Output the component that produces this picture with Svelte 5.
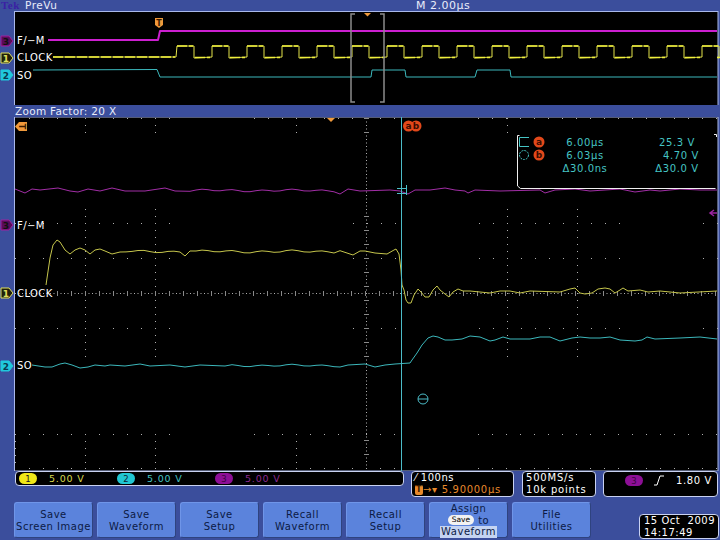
<script>
// every trace is stored in screen coordinates, the svg viewBoxes line up with them
const pts = (list) => list.map((p) => p.join(",")).join(" ");

// small repeatable ripple for the flat stretches of a trace
const ripple = (x0, x1, y, amp, step = 6) => {
	const out = [];
	for (let x = x0; x <= x1; x += step) {
		out.push([x, +(y + amp * Math.sin(x * 0.21) + amp * 0.6 * Math.sin(x * 0.077 + 1)).toFixed(1)]);
	}
	return out;
};

// preview square wave, 35px period
const clockPts = () => {
	const out = [[53, 57], [176, 57]];
	for (let x = 177; x < 718; x += 35) {
		out.push([x, 46], [x + 17, 46], [x + 17, 58], [Math.min(x + 35, 717), 57]);
	}
	return out;
};

// the flat tops and bottoms read as thicker dashes on the capture
const clockFlats = () => {
	let d = "M53 57H175";
	for (let x = 177; x < 718; x += 35) {
		d += `M${x} 46H${x + 16}M${x + 18} 57.500H${Math.min(x + 33, 717)}`;
	}
	return d;
};

const prevMagenta = pts([[48, 40], [158, 40], [160, 31], [717, 31]]);
const prevClock = pts(clockPts());
const prevFlats = clockFlats();
const prevSo = pts([[33, 70], [157, 69.5], [160, 77], [371, 77], [372, 70], [405, 70], [406, 77], [475, 77], [477, 70], [510, 70], [511, 77], [717, 77]]);

const mainMagenta = pts([
	[15, 189], [25, 193], [32, 189], [40, 190], [58, 188], [70, 191], [78, 192], [88, 189], [100, 191], [112, 188], [125, 191], [145, 191], [165, 188], [175, 191],
	...ripple(190, 335, 190.5, 0.9),
	[340, 194], [348, 189], [360, 191], [390, 190], [400, 191], [408, 194], [415, 190], [430, 190], [445, 188], [455, 190], [465, 191], [468, 193], [475, 190], [500, 191],
	[540, 190], [545, 193], [555, 190], [575, 189], [590, 191], [620, 189], [635, 192], [650, 190], [660, 191], [680, 189], [700, 190], [717, 190]
]);

const mainClock = pts([
	[46, 285], [50, 258], [53, 245], [57, 240], [60, 242], [65, 250], [70, 254], [75, 250], [80, 248], [85, 250], [90, 254], [95, 250], [100, 249], [105, 251], [112, 254], [120, 252],
	...ripple(126, 182, 251.5, 0.9),
	[185, 256], [190, 251],
	...ripple(196, 336, 251.5, 1),
	[340, 250.7], [353, 255], [360, 251], [365, 251], [375, 253], [387, 254], [394, 250], [396, 249], [399, 254], [401, 270], [402, 285], [404, 290], [406, 300], [408, 303], [411, 303], [414, 295], [418, 289], [421, 292], [425, 297], [429, 297], [433, 290], [437, 286], [440, 290], [445, 294], [449, 297], [453, 292], [458, 289], [463, 291], [470, 291], [480, 292], [490, 293], [500, 291], [510, 291], [520, 293], [530, 291],
	[560, 292], [570, 289], [575, 288], [580, 293], [585, 294], [592, 293], [598, 289], [605, 288], [610, 289], [615, 293], [620, 290], [623, 288], [628, 291], [640, 290], [648, 292], [660, 291], [680, 293], [717, 291]
]);

const mainSo = pts([
	[32, 365], [45, 367], [52, 367], [60, 364], [65, 363], [72, 365], [80, 368], [88, 367], [95, 365], [105, 366], [110, 365], [125, 366], [140, 364], [150, 366], [170, 365], [185, 367], [200, 365], [225, 366],
	...ripple(232, 336, 365.5, 0.8),
	[340, 367], [348, 365], [365, 364], [375, 367], [385, 365], [395, 364], [410, 363], [412, 360], [417, 353], [422, 345], [428, 338], [433, 336], [438, 337], [445, 340], [452, 340], [462, 339], [470, 336], [480, 337], [490, 341], [495, 340], [503, 337], [510, 339], [515, 339], [530, 339], [540, 337], [550, 337], [560, 341], [572, 338], [580, 337], [590, 338], [600, 338], [610, 337], [620, 340], [635, 341], [642, 340], [647, 337], [655, 339], [680, 338], [700, 337], [717, 339]
]);

// graticule dots, whole stretches of the grid do not show on the capture
const dots = [];
const addRow = (y, spans) => {
	for (const [a, b] of spans) {
		for (let x = a; x <= b; x += 14) dots.push([x, y]);
	}
};
const addColumn = (x, a, b) => {
	for (let y = a; y <= b; y += 7) dots.push([x, y]);
};

const innerSpans = [[15, 170], [353, 395], [479, 619], [703, 717]];
const edgeSpans = [[29, 170], [254, 395], [478, 717]];
for (const y of [223, 258, 328]) addRow(y, innerSpans);
for (const y of [118, 434, 468]) addRow(y, edgeSpans);
for (const x of [85, 155, 507, 577]) addColumn(x, 209, 356);
for (const x of [85, 155, 296, 507]) addColumn(x, 118, 132);
for (const x of [15, 85, 155, 296]) addColumn(x, 434, 468);
for (let y = 118; y <= 468; y += 3.5) dots.push([366, y]);
for (let x = 15; x <= 717; x += 3.5) dots.push([x, 293]);

const xTicks = [];
for (let x = 57; x < 717; x += 14) xTicks.push(x);
const yTicks = [];
for (let y = 118; y < 468; y += 14) {
	if (y < 135 || (y > 205 && y < 358) || y > 436) yTicks.push(y);
}

const channels = [
	{ id: 1, cls: "c1" },
	{ id: 2, cls: "c2" },
	{ id: 3, cls: "c3" }
];

const keys = [
	["Save", "Screen Image"],
	["Save", "Waveform"],
	["Save", "Setup"],
	["Recall", "Waveform"],
	["Recall", "Setup"]
];
</script>

{#snippet marker(y, n, fill, stroke, ink)}
	<path d="M1 {y - 5}H9L13 {y}L9 {y + 5}H1Z" fill={fill} stroke={stroke} />
	<text class="mark" x="6" y={y + 3.5} fill={ink}>{n}</text>
{/snippet}

<div class="scope">
	<header class="bar">
		<span class="tek">Tek</span>
		<span class="title">PreVu</span>
		<span class="timebase">M 2.00µs</span>
	</header>

	<svg class="preview" viewBox="0 11 720 94" width="720" height="94">
		<rect class="plot" x="14.5" y="11.5" width="703.5" height="94" />
		<polyline class="tr3 thick" points={prevMagenta} />
		<polyline class="tr1 thin" points={prevClock} />
		<path class="flats" d={prevFlats} />
		<polyline class="tr2" points={prevSo} />
		<path class="bracket" d="M355 14H351V102H355M380 14H384V102H380" />
		<path class="orange" d="M364 13H371L367.500 16.500Z" />
		<path class="orange" d="M155 18H163V25L159 28L155 25Z" />
		<text class="tmark" x="159" y="25.500">T</text>
		<text class="label" x="17" y="44">F/−M</text>
		<text class="label" x="17" y="61">CLOCK</text>
		<text class="label" x="17" y="79">SO</text>
		{@render marker(41, 3, "#5a0c5a", "#a020a0", "#111")}
		{@render marker(58, 1, "#20200a", "#e0e060", "#e0e060")}
		{@render marker(75, 2, "#20c8dc", "#20c8dc", "#083a50")}
	</svg>

	<div class="bar zoom">Zoom Factor: 20 X</div>

	<svg class="main" viewBox="0 117 720 354" width="720" height="354">
		<rect class="plot" x="14.5" y="117" width="703.5" height="354" />
		{#each dots as d}
			<rect class="dot" x={d[0]} y={d[1]} width="1" height="1" />
		{/each}
		{#each xTicks as x}
			<path class="tick" d="M{x + 0.5} 291V296" />
		{/each}
		{#each yTicks as y}
			<path class="tick" d="M364 {y + 0.5}H369" />
		{/each}

		<polyline class="tr3" points={mainMagenta} />
		<polyline class="tr1" points={mainClock} />
		<polyline class="tr2" points={mainSo} />

		<path class="cursor" d="M401.500 117V471" />
		<path class="cursor" d="M397 188.500H406M397 193.500H406M406.500 185V195" />
		<circle class="cursor" cx="423" cy="399" r="5" />
		<path class="cursor" d="M418 399H428" />

		<path class="orange" d="M327 118H335L331 122Z" />
		<path class="orange" d="M15 126.500L19 122H27V131H19Z" />
		<text class="tmark" transform="rotate(90 22 126.500)" x="22" y="129.500">T</text>
		<circle class="cur-dot" cx="408.500" cy="126" r="5.500" />
		<circle class="cur-dot" cx="416" cy="126" r="5.500" />
		<text class="cur-id" x="408.500" y="129">a</text>
		<text class="cur-id" x="416" y="129">b</text>
		<path class="ref" d="M717 213H711M714 210L710 213L714 216" />

		<path class="frame" d="M519.500 135.500H517.500V186L520.500 188.500H715.500M714 134.500H716.500V137" />
		<path class="cyan-line" d="M529 137.500H519.500V146.500H529" />
		<circle class="cyan-dash" cx="524" cy="155" r="4.500" />
		<circle class="cur-dot" cx="539" cy="142" r="5.500" />
		<circle class="cur-dot" cx="539" cy="155" r="5.500" />
		<text class="cur-id" x="539" y="145">a</text>
		<text class="cur-id" x="539" y="158">b</text>
		<g class="meas">
			<text x="585" y="146">6.00µs</text>
			<text x="585" y="159">6.03µs</text>
			<text x="585" y="172">Δ30.0ns</text>
			<text x="677" y="146">25.3 V</text>
			<text x="681" y="159">4.70 V</text>
			<text x="677" y="172">Δ30.0 V</text>
		</g>

		<text class="label" x="17" y="229">F/−M</text>
		<text class="label" x="17" y="297">CLOCK</text>
		<text class="label" x="17" y="369">SO</text>
		{@render marker(225, 3, "#5a0c5a", "#a020a0", "#111")}
		{@render marker(293, 1, "#20200a", "#e0e060", "#e0e060")}
		{@render marker(366, 2, "#20c8dc", "#20c8dc", "#083a50")}
	</svg>

	<section class="readouts">
		<div class="box channels">
			{#each channels as ch}
				<div class="channel {ch.cls}">
					<span class="pill">{ch.id}</span>
					<span class="volts">5.00 V</span>
				</div>
			{/each}
		</div>
		<div class="box horiz">
			<span><i class="slope">⁄</i> 100ns</span>
			<span class="pos"><b class="t-flag">T</b>→▾ 5.90000µs</span>
		</div>
		<div class="box rate">
			<span>500MS/s</span>
			<span>10k points</span>
		</div>
		<div class="box trig">
			<span class="pill p3">3</span>
			<svg class="edge" width="12" height="11" viewBox="0 0 12 11"><path d="M1 10H4L7 1H11" /></svg>
			<span class="level">1.80 V</span>
		</div>
	</section>

	<nav class="softkeys">
		{#each keys as k}
			<button type="button">{k[0]}<br />{k[1]}</button>
		{/each}
		<button type="button" class="assign">
			Assign
			<span class="line"><span class="chip">Save</span> to</span>
			<span class="sel">Waveform</span>
		</button>
		<button type="button">File<br />Utilities</button>
		<div class="box clock">
			<span>15 Oct&nbsp; 2009</span>
			<span>14:17:49</span>
		</div>
	</nav>
</div>

<style>
	:global(body) {
		margin: 0;
		background: #3b4e9c;
	}

	.scope {
		width: 720px;
		height: 540px;
		overflow: hidden;
		display: flex;
		flex-direction: column;
		background: #3b4e9c;
		font-family: "DejaVu Sans", sans-serif;
		font-size: 10px;
		letter-spacing: 0.5px;
		color: #fff;
	}

	.bar {
		height: 11px;
		flex: none;
		display: flex;
		align-items: center;
		line-height: 11px;
		color: #e8ecfa;
	}

	.tek {
		width: 24px;
		padding-left: 1px;
		font: bold 11px/11px "Liberation Serif", serif;
		color: #3a20a4;
	}

	.title {
		width: 391px;
		font-size: 10.500px;
	}

	.timebase {
		font-size: 11px;
	}

	.zoom {
		height: 12px;
		padding-left: 15px;
		font-size: 10.500px;
		letter-spacing: 0.3px;
	}

	svg {
		display: block;
		flex: none;
	}

	.plot {
		fill: #000;
		stroke: #a9b8ea;
		stroke-width: 1;
	}

	polyline {
		fill: none;
		stroke-width: 1;
		stroke-linejoin: round;
	}

	.tr1 { stroke: #c6c64c; }
	.tr2 { stroke: #3cb8bc; }
	.tr3 { stroke: #a22ea6; }

	.thick {
		stroke: #cc1fd0;
		stroke-width: 2;
	}

	.thin { stroke: #e4e44a; }

	.flats {
		fill: none;
		stroke: #f0f03c;
		stroke-width: 1.500;
		stroke-dasharray: 10 2;
	}

	.bracket {
		fill: none;
		stroke: #8c8c8c;
		stroke-width: 1.500;
	}

	.orange { fill: #f09a3c; }

	.tmark {
		font: bold 8px "DejaVu Sans", sans-serif;
		fill: #3a1c00;
		text-anchor: middle;
		letter-spacing: 0;
	}

	.label {
		fill: #fff;
		font-size: 10px;
		letter-spacing: 0.4px;
	}

	.mark {
		font: bold 9px "DejaVu Sans", sans-serif;
		text-anchor: middle;
		letter-spacing: 0;
	}

	.dot { fill: #b0b0b0; }

	.tick {
		stroke: #8a8a8a;
		stroke-width: 1;
	}

	.cursor {
		fill: none;
		stroke: #4cbcc8;
		stroke-width: 1;
	}

	.cur-dot { fill: #e2481a; }

	.cur-id {
		font: bold 9px "DejaVu Sans", sans-serif;
		fill: #3a0c00;
		text-anchor: middle;
		letter-spacing: 0;
	}

	.ref {
		fill: none;
		stroke: #9a24a0;
		stroke-width: 1.500;
	}

	.frame {
		fill: none;
		stroke: #f0f0f0;
		stroke-width: 1;
	}

	.cyan-line {
		fill: none;
		stroke: #45c4c4;
		stroke-width: 1;
	}

	.cyan-dash {
		fill: none;
		stroke: #45c4c4;
		stroke-width: 1;
		stroke-dasharray: 2 1;
	}

	.meas text {
		fill: #45c4c4;
		font-size: 10px;
		text-anchor: middle;
		letter-spacing: 0.6px;
	}

	.readouts {
		height: 26px;
		flex: none;
		display: flex;
		align-items: flex-start;
		padding-left: 15px;
	}

	.box {
		box-sizing: border-box;
		background: #000;
		border: 1px solid #c9d2f2;
		border-radius: 4px;
		display: flex;
		line-height: 12px;
	}

	.channels {
		width: 389px;
		height: 15px;
		align-items: center;
		padding-left: 3px;
		margin-right: 7px;
	}

	.channel {
		width: 98px;
		display: flex;
		align-items: center;
		gap: 12px;
	}

	.pill {
		width: 18px;
		height: 11px;
		border-radius: 6px;
		display: flex;
		align-items: center;
		justify-content: center;
		font-size: 8.500px;
		letter-spacing: 0;
	}

	.c1 .pill { background: #efe619; color: #222; }
	.c2 .pill { background: #21c6d2; color: #123; }
	.c3 .pill, .p3 { background: #8d0f96; color: #3a063e; }
	.c1 .volts { color: #d8d84e; }
	.c2 .volts { color: #45c4c4; }
	.c3 .volts { color: #8d2a92; }

	.volts { font-size: 9.500px; letter-spacing: 0.8px; }

	.horiz, .rate {
		height: 26px;
		flex-direction: column;
		justify-content: center;
		padding-left: 3px;
	}

	.horiz {
		width: 103px;
		margin-right: 8px;
	}

	.slope { font-style: normal; }

	.pos {
		display: flex;
		align-items: center;
		color: #e88a2c;
		white-space: nowrap;
		letter-spacing: 0.7px;
	}

	.t-flag {
		width: 8px;
		height: 10px;
		background: #e88a2c;
		color: #3a1c00;
		font-size: 8px;
		line-height: 10px;
		text-align: center;
		border-radius: 2px;
	}

	.rate {
		width: 74px;
		margin-right: 7px;
		letter-spacing: 0.8px;
	}

	.trig {
		width: 115px;
		height: 26px;
		align-items: flex-start;
		padding: 3px 5px 0 21px;
		gap: 10px;
	}

	.edge path {
		fill: none;
		stroke: #fff;
		stroke-width: 1;
	}

	.level {
		margin-left: auto;
		white-space: nowrap;
		letter-spacing: 0.6px;
	}

	.softkeys {
		height: 38px;
		margin-top: 5px;
		flex: none;
		display: flex;
		align-items: flex-start;
		padding-left: 14px;
		gap: 4px;
	}

	button {
		width: 79px;
		height: 36px;
		padding: 2px 0 0;
		box-sizing: border-box;
		background: #5b83dc;
		border: 1px solid #6f95e8;
		border-right-color: #2f437f;
		border-bottom-color: #2f437f;
		border-radius: 3px;
		font: 10px/12.500px "DejaVu Sans", sans-serif;
		letter-spacing: 0.5px;
		color: #0c1a44;
		text-align: center;
	}

	.assign {
		display: flex;
		flex-direction: column;
		align-items: center;
		padding-top: 0;
		line-height: 11.500px;
	}

	.line {
		display: flex;
		align-items: center;
		gap: 4px;
	}

	.chip {
		background: #f2f2f2;
		border-radius: 5px;
		padding: 0 4px;
		font-size: 7.500px;
		line-height: 10px;
		letter-spacing: 0;
		color: #000;
	}

	.sel {
		background: #c5d4f2;
		padding: 0 1px;
	}

	.clock {
		width: 80px;
		height: 25px;
		margin: 12px 0 0 44px;
		flex-direction: column;
		justify-content: center;
		padding-left: 4px;
		white-space: nowrap;
	}
</style>
